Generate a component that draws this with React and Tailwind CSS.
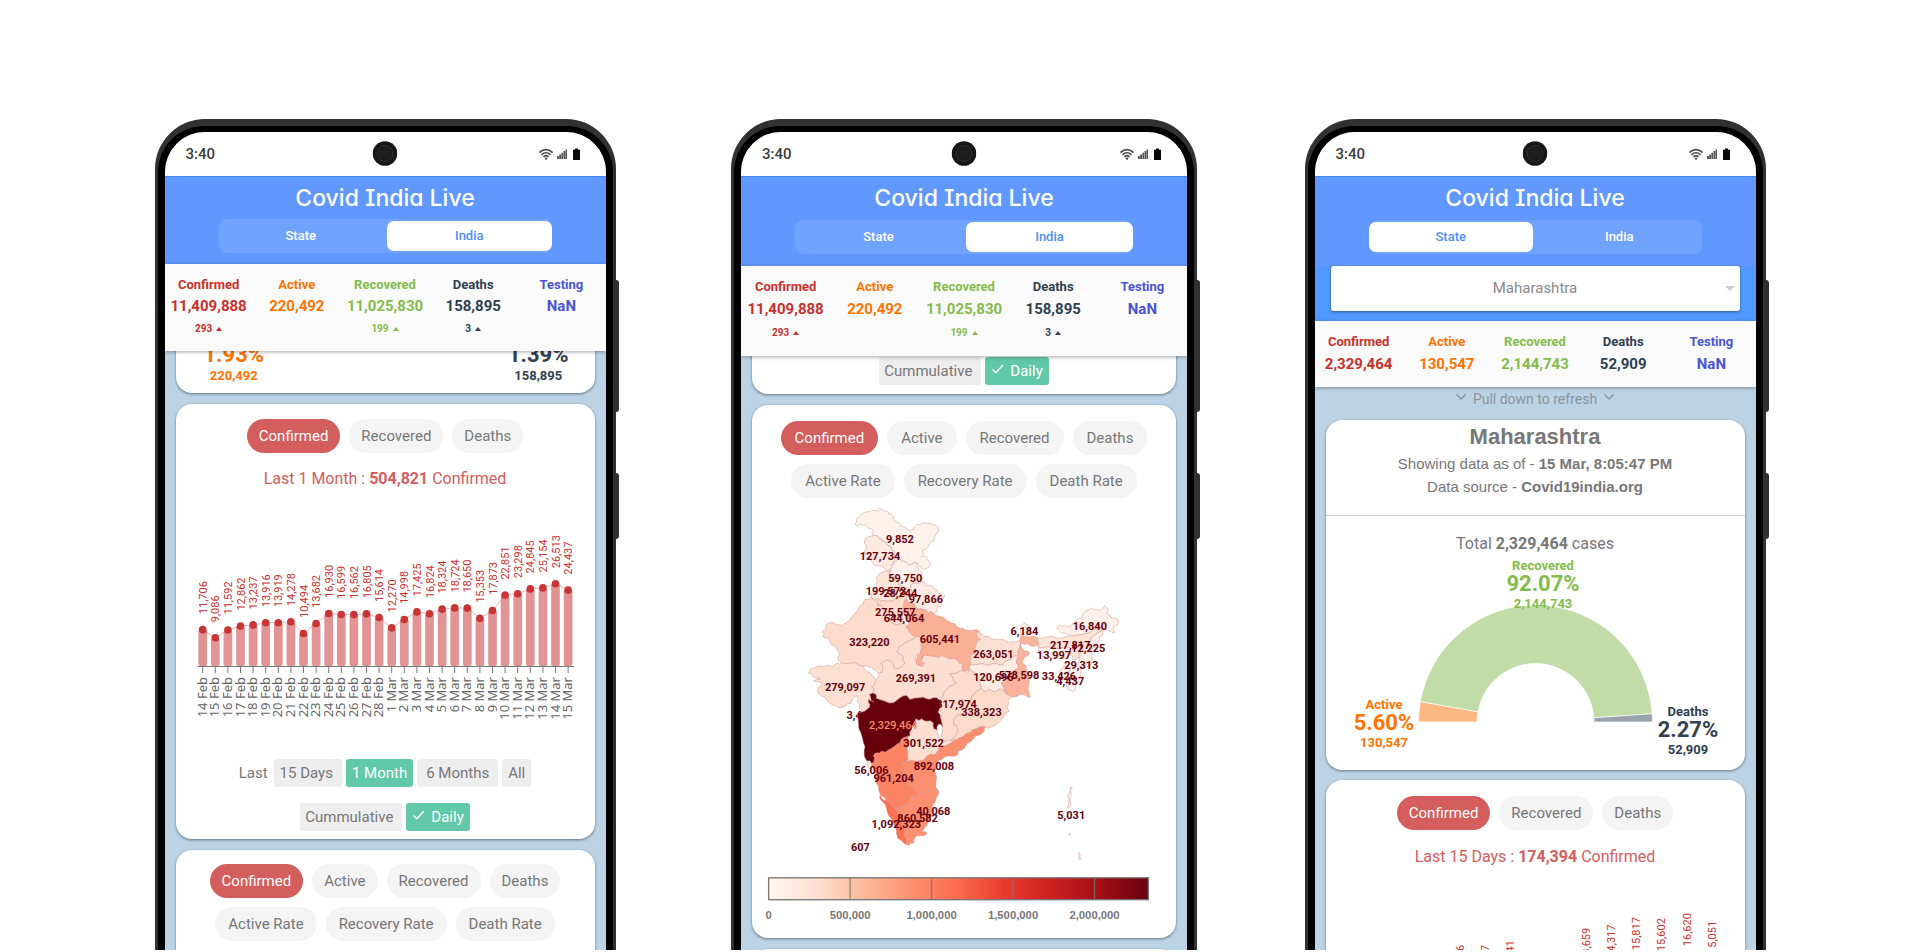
import React from "react";

const FEB_MAR = [
  ["14 Feb", 11706], ["15 Feb", 9086], ["16 Feb", 11592], ["17 Feb", 12862], ["18 Feb", 13237],
  ["19 Feb", 13916], ["20 Feb", 13919], ["21 Feb", 14278], ["22 Feb", 10494], ["23 Feb", 13682],
  ["24 Feb", 16930], ["25 Feb", 16599], ["26 Feb", 16562], ["27 Feb", 16805], ["28 Feb", 15614],
  ["1 Mar", 12270], ["2 Mar", 14998], ["3 Mar", 17425], ["4 Mar", 16824], ["5 Mar", 18324],
  ["6 Mar", 18724], ["7 Mar", 18650], ["8 Mar", 15353], ["9 Mar", 17873], ["10 Mar", 22851],
  ["11 Mar", 23298], ["12 Mar", 24845], ["13 Mar", 25154], ["14 Mar", 26513], ["15 Mar", 24437],
];

const MAHARASHTRA = [
  ["1 Mar", 6397], ["2 Mar", 7863], ["3 Mar", 9855], ["4 Mar", 8998], ["5 Mar", 10216],
  ["6 Mar", 10187], ["7 Mar", 11141], ["8 Mar", 8744], ["9 Mar", 9927], ["10 Mar", 13659],
  ["11 Mar", 14317], ["12 Mar", 15817], ["13 Mar", 15602], ["14 Mar", 16620], ["15 Mar", 15051],
];

const INDIA_STATS = [
  { label: "Confirmed", value: "11,409,888", delta: "293", color: "text-[#c9302c]" },
  { label: "Active", value: "220,492", color: "text-[#ff7300]" },
  { label: "Recovered", value: "11,025,830", delta: "199", color: "text-[#84bc4b]" },
  { label: "Deaths", value: "158,895", delta: "3", color: "text-[#2f4050]" },
  { label: "Testing", value: "NaN", color: "text-[#4a54d6]" },
];

const STATE_STATS = [
  { label: "Confirmed", value: "2,329,464", color: "text-[#c9302c]" },
  { label: "Active", value: "130,547", color: "text-[#ff7300]" },
  { label: "Recovered", value: "2,144,743", color: "text-[#84bc4b]" },
  { label: "Deaths", value: "52,909", color: "text-[#2f4050]" },
  { label: "Testing", value: "NaN", color: "text-[#4a54d6]" },
];

/* ---------- device ---------- */

function StatusBar() {
  return (
    <div className="relative flex h-[44px] shrink-0 items-center justify-between bg-white pl-[21px] pr-[25px] text-[#3c3c3c]">
      <span className="text-[15px] font-medium leading-5">3:40</span>
      <svg className="absolute left-1/2 top-[9px] h-[25px] w-[25px] -translate-x-1/2" viewBox="0 0 25 25">
        <circle cx="12.5" cy="12.5" r="12.3" fill="#161616" />
        <circle cx="12.5" cy="12.5" r="8" fill="#1c1c1c" stroke="#303030" />
        <path d="M7 11h11M7.5 14h10" stroke="#262626" strokeWidth="1" />
      </svg>
      <svg className="h-[12px] w-[42px]" viewBox="0 0 42 12" role="img" aria-label="Wi-Fi, signal, battery">
        <g fill="none" stroke="#4a4a4a" strokeWidth="1.7" strokeLinecap="round">
          <path d="M1 4.200C4.400 .7 9.600 .7 13 4.200" />
          <path d="M3 6.400C5.200 4.200 8.800 4.200 11 6.400" />
          <path d="M5 8.500C6.200 7.400 7.800 7.400 9 8.500" />
        </g>
        <circle cx="7" cy="10.6" r="1.2" fill="#4a4a4a" />
        <g fill="#555">
          <rect x="18" y="8" width="1.8" height="3" />
          <rect x="20.2" y="6.5" width="1.8" height="4.5" />
          <rect x="22.4" y="4.7" width="1.8" height="6.3" />
          <rect x="24.6" y="3" width="1.8" height="8" />
          <rect x="26.6" y="1.4" width="1.4" height="9.6" />
        </g>
        <path d="M36 .5h3v1.200h2V12h-7V1.700h2z" fill="#0a0a0a" />
      </svg>
    </div>
  );
}

function Phone({ className, children }) {
  return (
    <div className={"relative flex min-w-0 shrink flex-col " + className}>
      <div className="absolute -right-[3px] top-[161px] h-[132px] w-[6px] rounded-r-[3px] bg-[#303030]" />
      <div className="absolute -right-[3px] top-[354px] h-[66px] w-[6px] rounded-r-[3px] bg-[#303030]" />
      <div className="relative flex min-h-0 flex-1 flex-col rounded-t-[50px] bg-[#313131] px-[3px] pt-[7px]">
        <div className="flex min-h-0 flex-1 flex-col rounded-t-[46px] bg-black px-[7px] pt-[6px]">
          <div className="flex min-h-0 flex-1 flex-col overflow-hidden rounded-t-[40px] bg-[#bcd3e6]">
            <StatusBar />
            {children}
          </div>
        </div>
      </div>
    </div>
  );
}

function TopBar({ active, roomy }) {
  return (
    <header
      className={
        "flex shrink-0 flex-col border-t border-[#4289fb] bg-[#6098ff] px-[54px] pt-[7px] " +
        (roomy ? "gap-[8px] pb-[12px]" : "gap-[7px] pb-[11px]")
      }
    >
      <h1 className="text-center font-['Inter',sans-serif] text-[23px] font-medium leading-7 text-white [font-feature-settings:'cv11','cv08']">
        Covid India Live
      </h1>
      <div className="flex h-[34px] gap-1 rounded-lg bg-[#70a2ff] py-[2px]">
        {["State", "India"].map((t) => (
          <button
            key={t}
            type="button"
            aria-pressed={t === active}
            className={
              "flex-1 rounded-[7px] text-[13px] font-medium leading-5 " +
              (t === active ? "bg-white text-[#4d8ffb]" : "text-white")
            }
          >
            {t}
          </button>
        ))}
      </div>
    </header>
  );
}

function Stats({ items, className, valueClass }) {
  return (
    <section
      className={
        "relative z-10 grid shrink-0 grid-cols-5 bg-[#fafafa] pt-[11px] text-center font-bold shadow-[0_1px_4px_rgba(0,0,0,0.35)] " +
        className
      }
    >
      {items.map((s) => (
        <div key={s.label} className={s.color}>
          <div className="text-[13px] leading-5">{s.label}</div>
          <div className={"text-[15px] " + valueClass}>{s.value}</div>
          {s.delta && (
            <div className="mt-1 flex items-center justify-center gap-1 text-[10px] leading-4">
              {s.delta}
              <svg className="h-[4px] w-[6px]" viewBox="0 0 6 4">
                <path d="M3 0l3 4H0z" fill="currentColor" />
              </svg>
            </div>
          )}
        </div>
      ))}
    </section>
  );
}

function Card({ className, children }) {
  return (
    <section className={"rounded-[16px] bg-white shadow-[0_1px_3px_rgba(40,50,60,0.6)] " + className}>
      {children}
    </section>
  );
}

function Pills({ items, className = "", pad = "px-3" }) {
  return (
    <div className={"flex justify-center gap-[9px] " + className}>
      {items.map((p) => (
        <button
          key={p}
          type="button"
          className={
            "h-[34px] rounded-full text-[15px] leading-5 " +
            pad +
            (p === "Confirmed" ? " bg-[#d45d5d] text-white" : " bg-[#f4f4f4] text-[#777]")
          }
        >
          {p}
        </button>
      ))}
    </div>
  );
}

function Chip({ active, children, className = "px-[5px]" }) {
  return (
    <button
      type="button"
      className={
        "flex h-[28px] items-center rounded-[3px] text-[15px] leading-5 " +
        (active ? "bg-[#61c8a9] text-white " : "bg-[#eeeeee] text-[#777] ") +
        className
      }
    >
      {children}
    </button>
  );
}

function ModeRow() {
  return (
    <div className="flex justify-center gap-1">
      <Chip className="pl-[5px] pr-[9px]">Cummulative</Chip>
      <Chip active className="gap-[6px] px-[6px]">
        <svg className="mb-1 h-[10px] w-[13px]" viewBox="0 0 13 10" fill="none" stroke="currentColor" strokeWidth="1.4">
          <path d="M1.500 5.500l3.300 3.200L12 1" />
        </svg>
        Daily
      </Chip>
    </div>
  );
}

/* ---------- charts ---------- */

function BarChart({ data }) {
  const axis = 175;
  const band = 378 / data.length;
  const max = Math.max(...data.map((d) => d[1]));
  const pts = data.map(([label, v], i) => ({
    label,
    v,
    x: 20.400 + band * (i + 0.5),
    y: axis - (v / max) * 82.300,
  }));
  return (
    <svg className="block w-full" viewBox="0 0 419 260" role="img" aria-label="Daily confirmed cases">
      {pts.map((p) => (
        <rect key={p.label} x={p.x - band * 0.345} y={p.y} width={band * 0.69} height={axis - p.y} rx="2" fill="#e29393" />
      ))}
      <polyline points={pts.map((p) => p.x + "," + p.y).join(" ")} fill="none" stroke="#c9302c" strokeOpacity="0.45" strokeWidth="0.8" />
      <path d="M22 175.500H398" stroke="#777" strokeWidth="1" />
      {pts.map((p) => (
        <g key={p.label}>
          <circle cx={p.x} cy={p.y} r="3.8" fill="#c93434" />
          <path d={"M" + p.x + " 176v6"} stroke="#777" strokeWidth="1" />
          <text transform={"translate(" + (p.x + 4) + " " + (p.y - 15.500) + ") rotate(-90)"} className="font-['Roboto',sans-serif] text-[11px]" fill="#c9302c">
            {p.v.toLocaleString("en-US")}
          </text>
          <text transform={"translate(" + (p.x + 4) + " 186) rotate(-90)"} textAnchor="end" className="font-['Noto_Sans',sans-serif] text-[13px]" fill="#666">
            {p.label}
          </text>
        </g>
      ))}
    </svg>
  );
}

/* State outlines as flat x,y lists on a 1275-unit square canvas. */
const STATES = [
  ["#fff1ec", "405,402 408,388 420,380 432,368 448,365 465,362 475,356 490,360 500,362 505,372 520,378 525,392 540,400 548,410 560,416 568,422 580,418 585,410 600,404 620,400 640,404 652,410 654,425 645,440 642,452 628,462 622,472 608,480 612,492 608,500 622,505 630,518 628,530 612,538 604,530 592,520 575,524 560,518 548,514 535,505 522,498 524,485 512,470 500,462 488,455 478,446 462,436 455,432 458,420 445,415 436,404 420,402 408,406"],
  ["#feeae1", "462,436 445,440 432,460 438,475 432,490 440,500 450,508 460,520 475,528 490,534 500,542 510,540 514,525 522,515 522,498 524,485 512,470 500,462 488,455 478,446"],
  ["#fff0ea", "510,540 514,525 522,515 535,505 548,514 560,518 575,524 592,520 598,540 606,555 608,565 600,575 582,580 572,590 575,602 560,600 548,590 535,580 525,570 515,560 508,550"],
  ["#fee5d9", "510,540 505,548 490,546 478,552 470,562 472,575 470,590 462,605 452,618 460,628 475,628 490,632 510,634 525,628 540,620 548,608 545,598 548,590 535,580 525,570 515,560 508,550"],
  ["#feece4", "575,602 572,590 582,580 600,580 612,576 625,588 640,592 652,600 662,612 675,618 664,630 668,645 655,650 652,665 640,672 625,668 610,660 596,658 585,648 572,640 575,620"],
  ["#fddccd", "548,608 540,620 525,628 510,634 490,632 475,628 470,634 472,650 485,648 492,660 505,668 510,682 515,700 530,706 550,700 548,680 545,660 552,645 560,626 560,610"],
  ["#fddccc", "435,628 452,624 460,628 470,634 472,650 485,648 492,660 505,668 510,682 515,700 530,706 550,700 560,712 568,728 590,738 575,750 555,760 535,772 530,785 545,795 548,810 555,820 545,832 528,838 520,825 512,815 495,812 482,822 488,835 485,850 472,848 460,840 450,832 430,830 405,820 385,822 365,820 355,812 358,795 350,778 335,765 330,750 308,742 306,725 318,712 325,700 340,698 355,705 375,700 390,690 400,675 410,665 418,650 432,632"],
  ["#fde0d2", "265,850 280,835 310,830 340,832 352,820 365,820 385,822 405,820 430,830 440,845 455,855 462,862 466,878 455,892 462,905 452,914 446,928 448,945 440,960 424,968 418,956 412,936 410,918 402,922 392,942 376,950 356,955 340,948 322,936 302,918 292,902 310,884 280,875 300,868 280,862"],
  ["#fddfd1", "590,738 606,745 606,775 602,790 590,796 588,815 595,828 608,832 612,815 606,800 625,798 645,800 665,798 700,805 730,822 732,845 712,850 690,852 700,865 710,880 690,890 672,910 668,925 655,925 640,925 620,930 600,925 580,935 560,922 540,925 520,940 500,935 480,932 460,915 462,905 455,892 466,878 475,860 478,850 485,850 488,835 482,822 495,812 512,815 520,825 528,838 545,832 555,820 548,810 545,795 530,785 535,772 555,760 575,750"],
  ["#fbb096", "560,626 572,640 585,648 596,658 610,660 625,668 640,672 660,680 680,692 695,700 712,712 730,716 745,722 765,720 778,725 772,740 782,750 770,762 770,775 768,790 750,800 750,815 750,830 748,845 732,845 730,822 712,812 700,805 685,806 665,798 645,800 625,798 608,798 605,810 612,822 604,832 592,826 588,812 592,795 602,790 606,775 606,760 600,742 580,738 568,728 558,712 565,702 556,685 548,665 552,645"],
  ["#fde0d3", "772,725 785,732 795,740 808,742 820,748 840,750 860,755 880,755 900,752 902,768 895,785 898,800 880,800 865,812 850,825 830,822 810,826 790,822 770,825 752,825 750,800 768,790 770,762 782,750 772,740"],
  ["#feebe2", "752,825 770,825 790,822 810,826 830,822 850,825 865,812 880,800 895,805 890,820 895,835 880,845 862,865 845,880 858,910 840,898 830,905 815,903 800,905 785,895 770,870 765,850 752,842"],
  ["#fddccd", "752,842 732,845 712,850 690,852 700,865 710,880 690,890 672,910 668,925 660,935 655,955 668,970 665,985 660,1000 668,1010 664,1040 672,1055 690,1055 710,1035 712,1015 702,1005 700,990 715,975 730,975 740,955 752,940 755,920 770,905 785,895 770,870 765,850"],
  ["#fddbcb", "785,895 800,905 815,903 830,905 840,898 858,910 870,918 885,920 865,935 862,950 868,965 850,985 835,1000 815,1012 795,1012 770,1018 750,1030 730,1042 712,1050 690,1055 710,1035 712,1015 702,1005 700,990 715,975 730,975 740,955 752,940 755,920 770,905"],
  ["#fbb49b", "905,735 925,742 955,745 958,765 940,770 925,762 905,760 906,775 925,785 928,795 915,800 905,812 908,822 920,835 925,850 928,880 930,915 932,922 918,918 900,915 885,922 870,918 858,910 845,880 862,865 880,845 895,835 890,820 895,805 895,785 902,768 900,752"],
  ["#fff1ec", "905,735 903,715 915,698 925,705 928,720 924,741"],
  ["#fee4d8", "958,745 985,742 1010,744 1040,742 1060,738 1080,735 1100,730 1120,720 1140,705 1150,715 1135,730 1115,745 1105,760 1095,775 1080,790 1078,805 1060,810 1050,795 1060,780 1035,772 1000,775 970,775 955,770"],
  ["#fff0eb", "1012,712 1030,710 1045,712 1060,700 1070,690 1090,680 1095,665 1115,655 1130,658 1145,660 1155,648 1165,655 1160,672 1175,685 1195,690 1195,705 1180,712 1185,730 1165,722 1150,715 1140,705 1120,720 1100,730 1080,735 1060,738 1045,736 1030,730 1018,722"],
  ["#fff0eb", "955,770 970,775 1000,775 1035,772 1060,780 1050,795 1045,805 1010,805 965,800"],
  ["#fff0eb", "1150,715 1135,730 1115,745 1105,760 1110,780 1125,775 1140,750 1150,735"],
  ["#ffefe8", "1080,805 1080,790 1105,782 1118,800 1110,830 1085,835 1070,825"],
  ["#fff2ed", "1050,840 1070,828 1085,838 1080,870 1068,890 1060,908 1045,900 1042,870"],
  ["#ffefe8", "1020,845 1035,828 1050,840 1045,865 1030,870"],
  ["#fc8464", "563,1035 540,1060 525,1070 505,1082 485,1085 470,1090 460,1100 462,1112 455,1122 462,1140 468,1165 475,1190 482,1218 500,1235 515,1248 526,1258 545,1252 565,1245 572,1225 590,1220 598,1212 590,1205 580,1190 560,1185 555,1170 555,1150 550,1130 548,1118 563,1112 563,1090 568,1065"],
  ["#fc8e70", "795,1012 782,1035 755,1055 735,1075 715,1085 715,1095 690,1100 665,1110 650,1125 645,1145 650,1165 648,1185 652,1200 630,1205 598,1212 590,1205 580,1190 560,1185 555,1170 555,1150 550,1130 548,1118 565,1115 585,1115 610,1112 620,1100 645,1095 655,1082 660,1070 690,1062 712,1050 730,1042 750,1030 770,1018"],
  ["#fddfd1", "588,988 605,988 620,995 640,1000 642,1018 650,1022 660,1045 680,1058 690,1062 660,1070 655,1082 645,1095 620,1100 610,1112 585,1115 565,1115 563,1090 570,1070 563,1050 570,1038 588,1005"],
  ["#67000d", "412,975 424,968 440,960 450,945 446,930 462,938 452,925 448,915 468,915 468,926 495,935 520,940 540,925 560,918 570,930 600,925 620,928 640,925 658,930 660,955 655,968 662,985 666,1000 668,1012 655,1005 652,1022 642,1018 640,1000 620,995 605,988 588,988 588,1005 575,1020 570,1038 550,1045 540,1060 525,1070 505,1082 485,1085 470,1090 460,1100 462,1112 455,1122 440,1115 432,1085 430,1060 422,1030 415,1000"],
  ["#ffefe8", "440,1118 455,1122 462,1140 450,1140"],
  ["#fb7152", "480,1218 500,1235 515,1248 526,1258 540,1290 548,1310 555,1325 558,1350 556,1365 545,1355 530,1335 525,1310 515,1290 500,1260 485,1235"],
  ["#fc9070", "652,1200 655,1215 645,1240 638,1260 635,1285 622,1305 605,1330 622,1332 600,1340 585,1345 582,1360 565,1370 556,1365 558,1350 555,1325 548,1310 540,1290 526,1258 545,1252 565,1245 572,1225 590,1220 598,1212 630,1205"],
  ["#fff1ec", "1052,1194 1058,1195 1055,1215 1052,1235 1048,1258 1044,1256 1048,1230 1050,1210"],
  ["#fff1ec", "1048,1333 1052,1333 1052,1337 1048,1337"],
  ["#fff1ec", "1077,1390 1082,1396 1085,1410 1079,1412"],
];

const LABELS = [
  [540, 459, "9,852"], [480, 511, "127,734"], [556, 576, "59,750"], [498, 615, "199,573"], [541, 622, "28,244"],
  [618, 641, "97,866"], [526, 678, "275,557"], [552, 697, "644,064"], [448, 769, "323,220"], [660, 759, "605,441"],
  [821, 805, "263,051"], [914, 736, "6,184"], [1111, 720, "16,840"], [1052, 779, "217,817"], [1106, 788, "12,225"],
  [1003, 809, "13,997"], [1085, 838, "29,313"], [1018, 870, "33,426"], [1052, 886, "4,437"], [588, 876, "269,391"],
  [821, 874, "120,696"], [898, 868, "578,598"], [375, 905, "279,097"], [710, 955, "317,974"], [785, 981, "338,323"],
  [611, 1073, "301,522"], [642, 1142, "892,008"], [454, 1154, "56,006"], [521, 1178, "961,204"],
  [640, 1278, "40,068"], [593, 1297, "860,582"], [529, 1315, "1,092,323"], [421, 1386, "607"], [1055, 1289, "5,031"],
];

/* Adds a displaced midpoint to every edge; the offset depends on the edge alone, so neighbours share it. */
function coastline(list) {
  const pts = list.split(" ").map((p) => p.split(",").map(Number));
  const out = [];
  pts.forEach((a, i) => {
    const b = pts[(i + 1) % pts.length];
    const [p, q] = a[0] < b[0] || (a[0] === b[0] && a[1] < b[1]) ? [a, b] : [b, a];
    const len = Math.hypot(q[0] - p[0], q[1] - p[1]) || 1;
    const h = Math.sin(p[0] * 12.9898 + p[1] * 78.233 + q[0] * 37.719 + q[1] * 4.581) * 43758.5453;
    const k = ((h - Math.floor(h)) * 2 - 1) * Math.min(5, len * 0.3);
    out.push(a.join(","));
    out.push(
      ((p[0] + q[0]) / 2 - ((q[1] - p[1]) / len) * k).toFixed(1) + "," +
      ((p[1] + q[1]) / 2 + ((q[0] - p[0]) / len) * k).toFixed(1)
    );
  });
  return out.join(" ");
}

function IndiaMap() {
  const text = "font-['Roboto',sans-serif] text-[33px] font-bold";
  return (
    <svg className="block w-full" viewBox="95 330 1275 1275" role="img" aria-label="Confirmed cases by state">
      <defs>
        <linearGradient id="scale">
          <stop offset="0" stopColor="#fff5f0" />
          <stop offset="0.125" stopColor="#fee0d2" />
          <stop offset="0.22" stopColor="#fcc3a5" />
          <stop offset="0.375" stopColor="#fc9272" />
          <stop offset="0.5" stopColor="#fb6a4a" />
          <stop offset="0.625" stopColor="#e7392f" />
          <stop offset="0.75" stopColor="#cb1f20" />
          <stop offset="0.875" stopColor="#a00f15" />
          <stop offset="1" stopColor="#67000d" />
        </linearGradient>
      </defs>
      <text x="379" y="990" className={text} fill="#67000d">3,483</text>
      {STATES.map(([fill, list]) => (
        <polygon key={list} points={coastline(list)} fill={fill} stroke="#c98f8b" strokeOpacity="0.7" strokeWidth="2" strokeLinejoin="round" />
      ))}
      {LABELS.map(([x, y, t]) => (
        <text key={t} x={x} y={y} textAnchor="middle" className={text} fill="#67000d">{t}</text>
      ))}
      <text x="520" y="1018" textAnchor="middle" className="font-['Roboto',sans-serif] text-[33px] font-medium" fill="#fb8a6c">2,329,464</text>
      <rect x="145" y="1466" width="1142" height="66" fill="url(#scale)" stroke="#777" strokeWidth="4" />
      <path d="M390 1466v66M635 1466v66M880 1466v66M1125 1466v66" stroke="#777" strokeOpacity="0.8" strokeWidth="4" />
      <g className="font-['Liberation_Sans',sans-serif] text-[34px] font-bold" fill="#777" textAnchor="middle">
        <text x="145" y="1590">0</text>
        <text x="390" y="1590">500,000</text>
        <text x="635" y="1590">1,000,000</text>
        <text x="880" y="1590">1,500,000</text>
        <text x="1125" y="1590">2,000,000</text>
      </g>
    </svg>
  );
}

function arc(from, to) {
  const cx = 209.5, cy = 166, R = 117, r = 58.5;
  const pt = (deg, rad) => {
    const a = ((180 + deg) * Math.PI) / 180;
    return (cx + rad * Math.cos(a)).toFixed(2) + " " + (cy + rad * Math.sin(a)).toFixed(2);
  };
  return "M" + pt(from, R) + "A117 117 0 0 1 " + pt(to, R) + "L" + pt(to, r) + "A58.500 58.500 0 0 0 " + pt(from, r) + "Z";
}

function HalfDonut() {
  const groups = [
    { x: 58, y: 153, fill: "#ff7300", name: "Active", pct: "5.60%", n: "130,547" },
    { x: 217, y: 14, fill: "#84bc4b", name: "Recovered", pct: "92.07%", n: "2,144,743" },
    { x: 362, y: 160, fill: "#2f4050", name: "Deaths", pct: "2.27%", n: "52,909" },
  ];
  return (
    <svg className="block w-full" viewBox="0 0 419 214" role="img" aria-label="Share of cases by outcome">
      <g stroke="#fff" strokeOpacity="0.7" strokeWidth="1">
        <path d={arc(0, 10.080)} fill="#ffb782" />
        <path d={arc(10.080, 175.910)} fill="#c1dca6" />
        <path d={arc(175.910, 180)} fill="#9aa3ab" />
      </g>
      {groups.map((g) => (
        <g key={g.name} fill={g.fill} textAnchor="middle" className="font-['Roboto',sans-serif] font-bold">
          <text x={g.x} y={g.y} className="text-[13px]">{g.name}</text>
          <text x={g.x} y={g.y + 21} className="text-[22px]">{g.pct}</text>
          <text x={g.x} y={g.y + 38} className="text-[13px]">{g.n}</text>
        </g>
      ))}
    </svg>
  );
}

function Chevron() {
  return (
    <svg className="mb-1 h-[6px] w-[10px]" viewBox="0 0 10 6" fill="none" stroke="currentColor" strokeWidth="1.4">
      <path d="M.6 .6L5 5 9.400 .6" />
    </svg>
  );
}

/* ---------- page ---------- */

export default function App() {
  return (
    <main className="h-screen overflow-hidden border-b-2 border-white bg-white px-4 pt-[119px] font-['Roboto',sans-serif]">
      <div className="mx-auto flex h-full max-w-[1611px] justify-between">
        <Phone className="w-[461px]">
          <TopBar active="India" />
          <Stats items={INDIA_STATS} className="pb-[14px]" valueClass="leading-[22px]" />
          <div className="min-h-0 flex-1 overflow-hidden px-[11px]">
            <Card className="-mt-6 flex justify-between pb-[9px] pl-7 pr-[26px] pt-4 text-center font-bold">
              <div className="text-[#ff7300]">
                <div className="text-[22px] leading-6">1.93%</div>
                <div className="text-[13px] leading-[17px]">220,492</div>
              </div>
              <div className="text-[#2f4050]">
                <div className="text-[22px] leading-6">1.39%</div>
                <div className="text-[13px] leading-[17px]">158,895</div>
              </div>
            </Card>
            <Card className="mt-[11px] pb-2 pt-[15px]">
              <Pills items={["Confirmed", "Recovered", "Deaths"]} />
              <p className="mt-[14px] text-center text-[16px] leading-6 text-[#d45d5d]">
                Last 1 Month : <b>504,821</b> Confirmed
              </p>
              <BarChart data={FEB_MAR} />
              <div className="mb-4 mt-2 flex items-center justify-center gap-1 text-[15px] text-[#777]">
                <span className="mr-[2px]">Last</span>
                <Chip className="pl-[6px] pr-[9px]">15 Days</Chip>
                <Chip active className="px-[6px]">1 Month</Chip>
                <Chip className="px-[9px]">6 Months</Chip>
                <Chip className="px-[6px]">All</Chip>
              </div>
              <ModeRow />
            </Card>
            <Card className="mt-[11px] h-[200px] pt-[14px]">
              <Pills items={["Confirmed", "Active", "Recovered", "Deaths"]} />
              <Pills className="mt-[9px]" pad="px-[13px]" items={["Active Rate", "Recovery Rate", "Death Rate"]} />
            </Card>
          </div>
        </Phone>

        <Phone className="ml-2 w-[466px]">
          <TopBar active="India" roomy />
          <Stats items={INDIA_STATS} className="pb-[15px]" valueClass="leading-6" />
          <div className="min-h-0 flex-1 overflow-hidden px-[11px]">
            <Card className="-mt-4 pb-[9px] pt-[17px]">
              <ModeRow />
            </Card>
            <Card className="mt-[11px] pb-[14px] pt-4">
              <Pills pad="px-[14px]" items={["Confirmed", "Active", "Recovered", "Deaths"]} />
              <Pills className="mb-[2px] mt-[9px]" pad="px-[14px]" items={["Active Rate", "Recovery Rate", "Death Rate"]} />
              <IndiaMap />
            </Card>
            <Card className="mt-[11px] h-[200px]" />
          </div>
        </Phone>

        <Phone className="w-[461px]">
          <TopBar active="State" roomy />
          <div className="shrink-0 bg-[#5199ff] px-4 pb-[10px]">
            <div className="relative">
              <select
                aria-label="State"
                className="block h-[45px] w-full appearance-none rounded-[3px] bg-white px-4 text-center text-[15px] text-[#888] shadow-[0_1px_3px_rgba(0,0,0,0.4)] [text-align-last:center]"
              >
                <option>Maharashtra</option>
              </select>
              <svg className="pointer-events-none absolute right-[5px] top-[20px] h-[5px] w-[10px]" viewBox="0 0 10 5">
                <path d="M0 0h10L5 5z" fill="#ccc" />
              </svg>
            </div>
          </div>
          <Stats items={STATE_STATS} className="pb-[11px]" valueClass="leading-6" />
          <div className="min-h-0 flex-1 overflow-hidden px-[11px]">
            <div className="mb-[11px] mt-[2px] flex items-center justify-center gap-[7px] text-[14px] leading-5 text-[#8b949c]">
              <Chevron />
              Pull down to refresh
              <Chevron />
            </div>
            <Card className="pt-[3px] text-center text-[#777]">
              <div className="border-b border-[#cfcfcf] pb-[17px] font-['Liberation_Sans',sans-serif] text-[15px] leading-[23px]">
                <h2 className="mb-[1px] text-[22px] font-bold leading-7">Maharashtra</h2>
                <p>Showing data as of - <b>15 Mar, 8:05:47 PM</b></p>
                <p>Data source - <b>Covid19india.org</b></p>
              </div>
              <p className="mt-4 text-[16px] leading-6">Total <b>2,329,464</b> cases</p>
              <HalfDonut />
            </Card>
            <Card className="mt-[10px] pt-4">
              <Pills items={["Confirmed", "Recovered", "Deaths"]} />
              <p className="mt-[15px] text-center text-[16px] leading-6 text-[#d45d5d]">
                Last 15 Days : <b>174,394</b> Confirmed
              </p>
              <BarChart data={MAHARASHTRA} />
            </Card>
          </div>
        </Phone>
      </div>
    </main>
  );
}
